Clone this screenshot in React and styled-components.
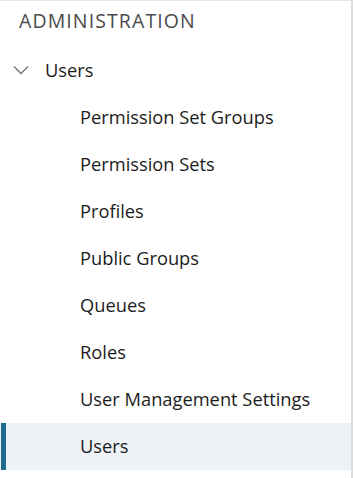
import React from 'react';
import styled, { createGlobalStyle } from 'styled-components';

const GlobalStyle = createGlobalStyle`
  body {
    margin: 0;
    background: #fff;
    font-family: "Open Sans", "Noto Sans", sans-serif;
  }
`;

const Panel = styled.nav`
  width: 351px;
  height: 477px;
  border-top: 1px solid #e6e6e6;
  border-right: 2px solid #dcdcdc;
  background: #fff;
`;

const Heading = styled.div`
  height: 46px;
  padding: 6px 0 0 19px;
  box-sizing: border-box;
  font-size: 19.5px;
  letter-spacing: 1.1px;
  color: #4b4b4b;
  line-height: 28px;
`;

const Row = styled.div`
  position: relative;
  display: flex;
  align-items: center;
  height: 47px;
  box-sizing: border-box;
  padding-left: ${(p) => (p.$nested ? '80px' : '13px')};
  padding-bottom: 3px;
  font-size: 18.3px;
  color: #1c1c1c;
  background: ${(p) => (p.$active ? '#eef1f6' : 'transparent')};

  &::before {
    content: '';
    display: ${(p) => (p.$active ? 'block' : 'none')};
    position: absolute;
    left: 1px;
    top: 0;
    bottom: 0;
    width: 5px;
    background: #1f6a91;
  }
`;

const Chevron = styled.svg`
  width: 16px;
  height: 10px;
  margin-right: 16px;
  margin-top: 2px;
`;

const items = [
  'Permission Set Groups',
  'Permission Sets',
  'Profiles',
  'Public Groups',
  'Queues',
  'Roles',
  'User Management Settings',
  'Users',
];

const App = () => (
  <>
    <GlobalStyle />
    <Panel>
      <Heading>ADMINISTRATION</Heading>
      <Row>
        <Chevron viewBox="0 0 16 10">
          <path d="M1 1.5 L8 8.5 L15 1.5" fill="none" stroke="#7a7876" strokeWidth="1.4" />
        </Chevron>
        Users
      </Row>
      {items.map((label, i) => (
        <Row key={label} $nested $active={i === items.length - 1}>
          {label}
        </Row>
      ))}
    </Panel>
  </>
);

export default App;
